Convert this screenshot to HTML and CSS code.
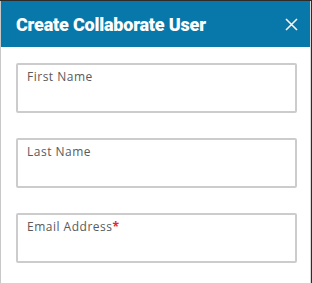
FILE: index.html
```html
<!DOCTYPE html>
<html lang="en">
<head>
    <meta charset="UTF-8">
    <title>Create Collaborate User</title>
    <link rel="stylesheet" href="styles.css">
</head>
<body>
    <div class="modal">
        <div class="modal-header">
            <span class="modal-title">Create Collaborate User</span>
            <button class="modal-close" aria-label="Close">
                <svg width="13" height="13" viewBox="0 0 13 13">
                    <path d="M1 1L12 12M12 1L1 12" stroke="#fff" stroke-width="1.5" fill="none"/>
                </svg>
            </button>
        </div>
        <div class="modal-body">
            <div class="field">
                <span class="field-label">First Name</span>
            </div>
            <div class="field">
                <span class="field-label">Last Name</span>
            </div>
            <div class="field">
                <span class="field-label">Email Address<span class="required">*</span></span>
            </div>
        </div>
    </div>
</body>
</html>
```

FILE: styles.css
```css
body {
    margin: 0;
    background-color: #2e2b29;
    overflow: hidden;
}

.modal {
    width: 309px;
    height: 282px;
    margin-top: 1px;
    background-color: #fff;
    border-left: 1px solid #c8c8c8;
    border-right: 1px solid #d8d8d8;
}

.modal-header {
    display: flex;
    align-items: center;
    justify-content: space-between;
    height: 46px;
    padding: 0 12px 0 15px;
    background-color: #0778a9;
}

.modal-title {
    color: #fff;
    font-family: Roboto, "Liberation Sans", sans-serif;
    font-weight: 900;
    font-size: 18px;
    letter-spacing: -0.2px;
}

.modal-close {
    display: flex;
    padding: 0;
    border: none;
    background: none;
    cursor: pointer;
}

.modal-body {
    display: flex;
    flex-direction: column;
    gap: 25px;
    padding: 16px 13px 0 15px;
}

.field {
    height: 44px;
    padding: 2px 9px 0;
    border: 2px solid #cccccc;
    border-radius: 2px;
}

.field-label {
    font-family: "Open Sans", sans-serif;
    font-size: 12px;
    letter-spacing: 0.5px;
    color: #5a5a5a;
}

.required {
    color: #e8262a;
    font-weight: 700;
}
```
